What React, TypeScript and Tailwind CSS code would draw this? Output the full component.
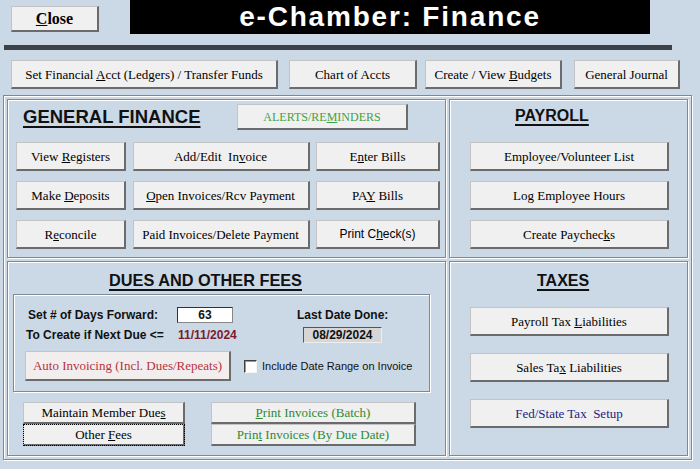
import type { ReactNode } from "react";

const etched = "border border-[#7d8996] shadow-[inset_1px_1px_0_#ffffff,1px_1px_0_#ffffff]";

function Btn({
  children,
  className = "",
  tone = "text-black",
  font = "font-['Liberation_Serif',serif] text-[13px]",
}: {
  children: ReactNode;
  className?: string;
  tone?: string;
  font?: string;
}) {
  return (
    <button
      className={`flex items-center justify-center bg-[#f0f0f0] border-t border-l border-r-2 border-b-2 border-t-[#c4c4c4] border-l-[#c4c4c4] border-r-[#6b6b6b] border-b-[#6b6b6b] leading-none whitespace-nowrap ${font} ${tone} ${className}`}
    >
      <span>{children}</span>
    </button>
  );
}

function Heading({ children, className = "" }: { children: ReactNode; className?: string }) {
  return (
    <span className={`font-['Liberation_Sans',sans-serif] font-bold underline underline-offset-[3px] decoration-2 text-[#111] ${className}`}>
      {children}
    </span>
  );
}

export default function App() {
  return (
    <div className="w-[700px] h-[469px] overflow-hidden bg-[#cbd8e6] flex flex-col">
      {/* header */}
      <div className="flex h-[36px]">
        <Btn className="mt-[6px] ml-[11px] w-[88px] h-[26px]" font="font-['Liberation_Serif',serif] text-[16px] font-bold">
          <u>C</u>lose
        </Btn>
        <div className="ml-[31px] w-[520px] h-[34px] bg-black flex items-center justify-center">
          <span className="font-['Liberation_Sans',sans-serif] font-bold text-[28px] tracking-[1.8px] text-white leading-none">
            e-Chamber: Finance
          </span>
        </div>
      </div>
      <div className="mt-[9px] ml-[4px] w-[668px] h-[5px] bg-[#3d4148]" />

      {/* top actions */}
      <div className="flex mt-[10px] h-[29px]">
        <Btn className="ml-[11px] w-[267px]">
          Set Financial <u>A</u>cct (Ledgers) / Transfer Funds
        </Btn>
        <Btn className="ml-[11px] w-[128px]">Chart of Accts</Btn>
        <Btn className="ml-[8px] w-[137px]">
          Create / View <u>B</u>udgets
        </Btn>
        <Btn className="ml-[12px] w-[106px]">General Journal</Btn>
      </div>

      {/* main frame */}
      <div className={`mt-[6px] ml-[3px] w-[689px] h-[365px] p-[3px] grid grid-cols-[439px_239px] grid-rows-[159px_195px] gap-[3px] ${etched}`}>
        {/* general finance */}
        <section className={`${etched} flex flex-col pt-[4px] pl-[8px]`}>
          <div className="flex items-center h-[26px]">
            <Heading className="ml-[7px] w-[214px] text-[18.5px]">GENERAL FINANCE</Heading>
            <Btn className="w-[171px] h-[26px]" tone="text-[#43a243]" font="font-['Liberation_Serif',serif] text-[12px]">
              ALERTS/RE<u>M</u>INDERS
            </Btn>
          </div>
          <div className="mt-[12px] grid grid-cols-[110px_177px_124px] auto-rows-[29px] gap-x-[6.5px] gap-y-[10px]">
            <Btn>
              View <u>R</u>egisters
            </Btn>
            <Btn>
              Add/Edit&nbsp; In<u>v</u>oice
            </Btn>
            <Btn>
              E<u>n</u>ter Bills
            </Btn>
            <Btn>
              Make <u>D</u>eposits
            </Btn>
            <Btn>
              <u>O</u>pen Invoices/Rcv Payment
            </Btn>
            <Btn>
              PA<u>Y</u> Bills
            </Btn>
            <Btn>
              R<u>e</u>concile
            </Btn>
            <Btn>Paid Invoices/Delete Payment</Btn>
            <Btn font="font-['Liberation_Sans',sans-serif] text-[12px]">
              Print C<u>h</u>eck(s)
            </Btn>
          </div>
        </section>

        {/* payroll */}
        <section className={`${etched} flex flex-col pt-[5px]`}>
          <div className="h-[20px] pl-[65px] leading-[20px]">
            <Heading className="text-[16px]">PAYROLL</Heading>
          </div>
          <div className="mt-[17px] ml-[20px] flex flex-col gap-[10px]">
            <Btn className="w-[199px] h-[29px]">Employee/Volunteer List</Btn>
            <Btn className="w-[199px] h-[29px]">Log Employee Hours</Btn>
            <Btn className="w-[199px] h-[29px]">
              Create Paychec<u>k</u>s
            </Btn>
          </div>
        </section>

        {/* dues and other fees */}
        <section className={`${etched} flex flex-col pt-[8px]`}>
          <div className="h-[20px] pl-[101px] leading-[20px]">
            <Heading className="text-[16.3px]">DUES AND OTHER FEES</Heading>
          </div>
          <div className={`mt-[4px] ml-[5px] w-[417px] h-[98px] flex flex-col pt-[12px] ${etched}`}>
            <div className="flex items-center h-[16px] font-['Liberation_Sans',sans-serif] font-bold text-[12px] text-[#111]">
              <span className="ml-[14px] w-[149px]">Set # of Days Forward:</span>
              <span className="w-[56px] h-[16px] bg-white border border-t-[#333] border-l-[#333] border-r-[#888] border-b-[#888] flex items-center justify-center">
                63
              </span>
              <span className="ml-[64px]">Last Date Done:</span>
            </div>
            <div className="flex items-center mt-[4px] h-[16px] font-['Liberation_Sans',sans-serif] font-bold text-[12px] text-[#111]">
              <span className="ml-[12px] w-[152px]">To Create if Next Due &lt;=</span>
              <span className="w-[125px] text-[#7a1c2c]">11/11/2024</span>
              <span className="w-[79px] h-[16px] bg-[#d6d6d6] border border-t-[#555] border-l-[#555] border-r-[#eee] border-b-[#eee] flex items-center justify-center">
                08/29/2024
              </span>
            </div>
            <div className="flex items-center mt-[8px] h-[30px]">
              <Btn className="ml-[11px] w-[206px] h-[30px] bg-[#f3eeee]" tone="text-[#b8323c]">
                Auto Invoicing (Incl. Dues/Repeats)
              </Btn>
              <span className="ml-[13px] w-[13px] h-[13px] bg-white border border-t-[#404040] border-l-[#404040] border-r-[#f4f4f4] border-b-[#f4f4f4] shadow-[inset_1px_1px_0_#9a9a9a]" />
              <span className="ml-[5px] font-['Liberation_Sans',sans-serif] text-[11px] text-[#111]">
                Include Date Range on Invoice
              </span>
            </div>
          </div>
          <div className="mt-[10px] ml-[15px] flex gap-[26px]">
            <div className="flex flex-col w-[162px]">
              <Btn className="h-[22px]">
                Maintain Member Due<u>s</u>
              </Btn>
              <Btn className="h-[22px] outline-1 outline-dotted outline-black -outline-offset-1">
                Other <u>F</u>ees
              </Btn>
            </div>
            <div className="flex flex-col w-[205px]">
              <Btn className="h-[22px]" tone="text-[#2f8a34]">
                <u>P</u>rint Invoices (Batch)
              </Btn>
              <Btn className="h-[22px]" tone="text-[#2f8a34]">
                Prin<u>t</u> Invoices (By Due Date)
              </Btn>
            </div>
          </div>
        </section>

        {/* taxes */}
        <section className={`${etched} flex flex-col pt-[8px]`}>
          <div className="h-[20px] pl-[87px] leading-[20px]">
            <Heading className="text-[16px]">TAXES</Heading>
          </div>
          <div className="mt-[17px] ml-[20px] flex flex-col gap-[17px]">
            <Btn className="w-[199px] h-[29px]">
              Payroll Tax <u>L</u>iabilities
            </Btn>
            <Btn className="w-[199px] h-[29px]">
              Sales Ta<u>x</u> Liabilities
            </Btn>
            <Btn className="w-[199px] h-[29px]" tone="text-[#1d1d84]">
              Fed/State Tax&nbsp; Setup
            </Btn>
          </div>
        </section>
      </div>
    </div>
  );
}
